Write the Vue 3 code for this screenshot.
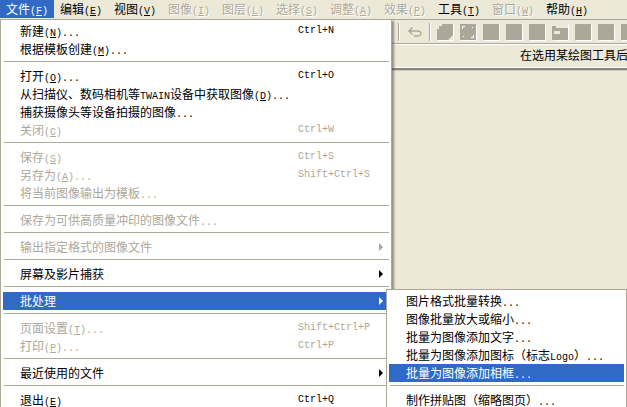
<script setup>
const parse = (t) => {
  const out = []
  const re = /&(.)|([\x20-\x25\x27-\x7e]+)|([^\x20-\x7e]+)/g
  let m
  while ((m = re.exec(t))) {
    if (m[1]) out.push({ s: m[1], c: 'lat und' })
    else if (m[2]) out.push({ s: m[2], c: 'lat' })
    else out.push({ s: m[3], c: 'cjk' })
  }
  return out
}
const bar = [
  ['文件(&F)', 'sel'], ['编辑(&E)', ''], ['视图(&V)', ''], ['图像(&I)', 'dis'], ['图层(&L)', 'dis'],
  ['选择(&S)', 'dis'], ['调整(&A)', 'dis'], ['效果(&P)', 'dis'], ['工具(&T)', ''], ['窗口(&W)', 'dis'], ['帮助(&H)', ''],
].map(([t, c]) => ({ parts: parse(t), c }))
const row = (t, k = '', c = '', arrow = false) => ({ parts: parse(t), k, c, arrow })
const sep = { sep: true }
const menu = [
  row('新建(&N)...', 'Ctrl+N'), row('根据模板创建(&M)...'), sep,
  row('打开(&O)...', 'Ctrl+O'), row('从扫描仪、数码相机等TWAIN设备中获取图像(&D)...'), row('捕获摄像头等设备拍摄的图像...'), row('关闭(&C)', 'Ctrl+W', 'dis'), sep,
  row('保存(&S)', 'Ctrl+S', 'dis'), row('另存为(&A)...', 'Shift+Ctrl+S', 'dis'), row('将当前图像输出为模板...', '', 'dis'), sep,
  row('保存为可供高质量冲印的图像文件...', '', 'dis'), sep,
  row('输出指定格式的图像文件', '', 'dis', true), sep,
  row('屏幕及影片捕获', '', '', true), sep,
  row('批处理', '', 'sel', true), sep,
  row('页面设置(&T)...', 'Shift+Ctrl+P', 'dis'), row('打印(&P)...', 'Ctrl+P', 'dis'), sep,
  row('最近使用的文件', '', '', true), sep,
  row('退出(&E)', 'Ctrl+Q'),
]
const sub = [
  row('图片格式批量转换...'), row('图像批量放大或缩小...'), row('批量为图像添加文字...'),
  row('批量为图像添加图标（标志Logo）...'), row('批量为图像添加相框...', '', 'sel'), sep, row('制作拼贴图（缩略图页）...'),
]
const tools = ['fold', 'crop', '', '', '', 'band', '', '', '']
</script>

<template>
  <div class="app">
    <div class="menubar">
      <div v-for="(b, i) in bar" :key="i" class="baritem" :class="b.c">
        <span v-for="(p, j) in b.parts" :key="j" :class="p.c">{{ p.s }}</span>
      </div>
    </div>
    <div class="toolbar">
      <span class="grip"></span>
      <svg class="undo" width="14" height="10" viewBox="0 0 14 10">
        <path d="M4.500 .5 1 4h8c2.500 0 4 1 4 2.500S11.500 9 9 9H6M1 4l3.500 3.500" fill="none" stroke="#aca899" stroke-width="1.300"/>
      </svg>
      <span class="grip second"></span>
      <svg v-for="(t, i) in tools" :key="i" class="tool" width="17" height="17" viewBox="0 0 17 17">
        <path d="M1 1h16v16H1z" fill="#fff"/>
        <rect width="16" height="16" fill="#aca899"/>
        <path v-if="t === 'fold'" d="M0 0h5v2H2v3H0zM16 11l-5 5h5z" fill="#ece9d8"/>
        <path v-if="t === 'crop'" d="M2 2h3v1H3v2H2zM14 14h-3v-1h2v-2h1zM12 3h1v1h-1zM3 12h1v1H3z" fill="#fff"/>
        <path v-if="t === 'band'" d="M0 0h16v2H0zM4 2h12v2H4zM2 7h6v3H2z" fill="#ece9d8"/>
      </svg>
    </div>
    <div class="hint"><span class="cjk">在选用某绘图工具后</span></div>
    <div class="rule"></div>

    <div class="popup main">
      <template v-for="(r, i) in menu" :key="i">
        <div v-if="r.sep" class="sep"></div>
        <div v-else class="item" :class="r.c">
          <span class="label"><span v-for="(p, j) in r.parts" :key="j" :class="p.c">{{ p.s }}</span></span>
          <span class="lat">{{ r.k }}</span>
          <span v-if="r.arrow" class="arrow"></span>
        </div>
      </template>
    </div>
    <div class="popup side">
      <template v-for="(r, i) in sub" :key="i">
        <div v-if="r.sep" class="sep"></div>
        <div v-else class="item" :class="r.c">
          <span class="label"><span v-for="(p, j) in r.parts" :key="j" :class="p.c">{{ p.s }}</span></span>
        </div>
      </template>
    </div>
  </div>
</template>

<style>
html, body { margin: 0; background: #ece9d8; }
</style>

<style scoped>
.app {
  position: relative;
  width: 627px;
  height: 407px;
  overflow: hidden;
  background: #ece9d8;
  color: #000;
  font-size: 12px;
  line-height: 14px;
}
.cjk { font: 12px/14px "Noto Sans CJK SC", sans-serif; }
.lat { font: 10px/14px "Liberation Mono", monospace; }
.und { text-decoration: underline; }
.menubar { display: flex; height: 19px; border-bottom: 1px solid #aca899; }
.baritem { width: 54px; height: 18px; box-sizing: border-box; padding: 2px 0 0 6px; white-space: pre; }
.baritem.sel { background: #316ac5; color: #fff; }
.baritem.dis { color: #aca899; text-shadow: 1px 1px 0 #fff; }
.toolbar {
  display: flex;
  align-items: center;
  box-sizing: border-box;
  height: 24px;
  padding: 1px 0 0 398px;
  overflow: hidden;
  border-bottom: 1px solid #aca899;
  box-shadow: 0 1px 0 #fff;
}
.grip { flex: none; width: 1px; height: 18px; background: #aca899; box-shadow: 1px 0 0 #fff; }
.undo { flex: none; margin: 0 7px 0 9px; }
.grip.second { margin-right: 7px; }
.tool { flex: none; margin: 1px 6px 0 0; }
.hint { height: 23px; padding: 4px 0 0 520px; box-sizing: border-box; white-space: pre; }
.rule { height: 2px; margin-top: 1px; background: #85837a; box-shadow: 0 1px 0 #cfccbd, 0 -1px 0 #fff; }
.popup {
  position: absolute;
  box-sizing: border-box;
  background: #fff;
  border: 1px solid #aca899;
  box-shadow: 2px 2px 2px rgba(70, 68, 60, 0.55);
}
.main { left: 0; top: 19px; width: 392px; height: 392px; padding: 2px 2px; }
.side { left: 386px; top: 289px; width: 241px; height: 120px; padding: 2px 2px; }
.item { position: relative; display: flex; height: 18px; box-sizing: border-box; padding: 2px 0 0 17px; white-space: pre; }
.item .label { flex: none; width: 278px; }
.side .item .label { width: auto; }
.item.dis { color: #aca899; }
.item.sel { background: #316ac5; color: #fff; }
.main .item.sel { margin-right: 3px; }
.sep { height: 9px; box-sizing: border-box; padding-top: 3px; margin-left: 1px; }
.sep::before { content: ""; display: block; height: 1px; background: #aca899; }
.arrow {
  position: absolute;
  right: 6px;
  top: 5px;
  border-left: 4px solid currentColor;
  border-top: 4px solid transparent;
  border-bottom: 4px solid transparent;
}
.item.sel .arrow { right: 3px; }
</style>
